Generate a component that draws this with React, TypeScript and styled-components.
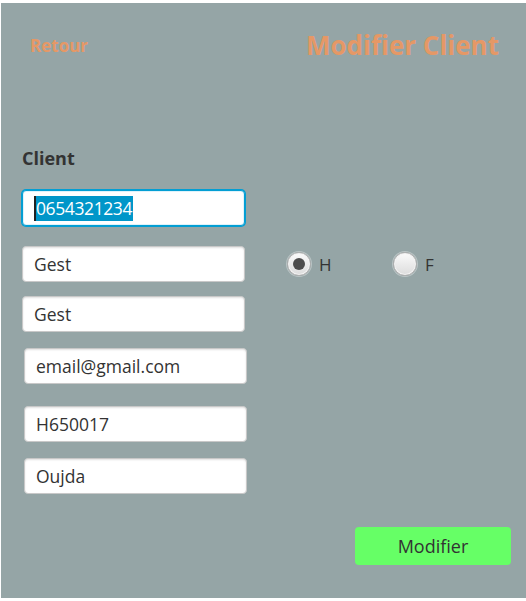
import React from 'react';
import styled, { createGlobalStyle } from 'styled-components';

const GlobalStyle = createGlobalStyle`
    html, body {
        margin: 0;
        padding: 0;
        background: #ffffff;
    }
    body {
        font-family: "Open Sans", "Noto Sans", "Liberation Sans", sans-serif;
    }
`;

const Window = styled.div`
    width: 526px;
    height: 601px;
    padding: 3px 0 3px 1px;
    box-sizing: border-box;
    background: #ffffff;
`;

const Pane = styled.div`
    height: 100%;
    background: #95a5a6;
    display: flex;
    flex-direction: column;
`;

const Header = styled.div`
    height: 84px;
    display: flex;
    align-items: center;
    justify-content: space-between;
    padding: 0 27px 0 29px;
`;

const BackLink = styled.span`
    color: #e59866;
    font-weight: 700;
    font-size: 17px;
    cursor: pointer;
`;

const Title = styled.h1`
    margin: 0;
    color: #e59866;
    font-weight: 700;
    font-size: 26px;
`;

const SectionLabel = styled.div`
    margin: 59px 0 0 21px;
    color: #333333;
    font-weight: 700;
    font-size: 18px;
    line-height: 24px;
`;

const Row = styled.div<{ $top: number }>`
    display: flex;
    align-items: center;
    margin-top: ${p => p.$top}px;
`;

const TextBox = styled.div<{ $left: number; $focused?: boolean }>`
    margin-left: ${p => p.$left}px;
    width: 223px;
    height: 36px;
    box-sizing: border-box;
    display: flex;
    align-items: center;
    padding-left: 11px;
    background: #ffffff;
    border-radius: 4px;
    font-size: 17.5px;
    color: #333333;
    border: 1px solid ${p => (p.$focused ? '#039ed3' : '#c8c8c8')};
    box-shadow: ${p =>
        p.$focused
            ? '0 0 0 1px #039ed3, inset 0 0 0 1px #dff3fb'
            : 'inset 0 1px 2px rgba(0, 0, 0, 0.12)'};
`;

const Caret = styled.span`
    display: inline-block;
    width: 2px;
    height: 25px;
    background: #222222;
`;

const Selected = styled.span`
    background: #0096c9;
    color: #ffffff;
    line-height: 25px;
    letter-spacing: -0.4px;
    padding-right: 1px;
`;

const RadioGroup = styled.div`
    display: flex;
    align-items: center;
    margin-left: 42px;
`;

const RadioOption = styled.label`
    display: flex;
    align-items: center;
    gap: 8px;
    width: 106px;
    color: #333333;
    font-size: 17px;
`;

const RadioMark = styled.span<{ $checked?: boolean }>`
    position: relative;
    width: 24px;
    height: 24px;
    box-sizing: border-box;
    border-radius: 50%;
    border: 1px solid #b0b0b0;
    background: linear-gradient(#fbfbfb, #dcdcdc);
    box-shadow: inset 0 0 0 1px #f2f2f2, 0 0 0 1px rgba(255, 255, 255, 0.35);

    &::after {
        content: '';
        display: ${p => (p.$checked ? 'block' : 'none')};
        position: absolute;
        left: 50%;
        top: 50%;
        width: 12px;
        height: 12px;
        margin: -6px 0 0 -6px;
        border-radius: 50%;
        background: #4d4d4d;
    }
`;

const Footer = styled.div`
    display: flex;
    justify-content: flex-end;
    padding-right: 15px;
    margin-top: 33px;
`;

const SubmitButton = styled.button`
    width: 156px;
    height: 38px;
    border: none;
    border-radius: 4px;
    background: #66ff66;
    color: #333333;
    font-family: inherit;
    font-size: 18px;
    cursor: pointer;
`;

export default function App() {
    return (
        <>
            <GlobalStyle />
            <Window>
                <Pane>
                    <Header>
                        <BackLink>Retour</BackLink>
                        <Title>Modifier Client</Title>
                    </Header>

                    <SectionLabel>Client</SectionLabel>

                    <Row $top={20}>
                        <TextBox $left={21} $focused>
                            <Caret />
                            <Selected>0654321234</Selected>
                        </TextBox>
                    </Row>

                    <Row $top={20}>
                        <TextBox $left={21}>Gest</TextBox>
                        <RadioGroup>
                            <RadioOption>
                                <RadioMark $checked />
                                H
                            </RadioOption>
                            <RadioOption>
                                <RadioMark />
                                F
                            </RadioOption>
                        </RadioGroup>
                    </Row>

                    <Row $top={14}>
                        <TextBox $left={21}>Gest</TextBox>
                    </Row>
                    <Row $top={16}>
                        <TextBox $left={23}>email@gmail.com</TextBox>
                    </Row>
                    <Row $top={22}>
                        <TextBox $left={23}>H650017</TextBox>
                    </Row>
                    <Row $top={16}>
                        <TextBox $left={23}>Oujda</TextBox>
                    </Row>

                    <Footer>
                        <SubmitButton>Modifier</SubmitButton>
                    </Footer>
                </Pane>
            </Window>
        </>
    );
}
